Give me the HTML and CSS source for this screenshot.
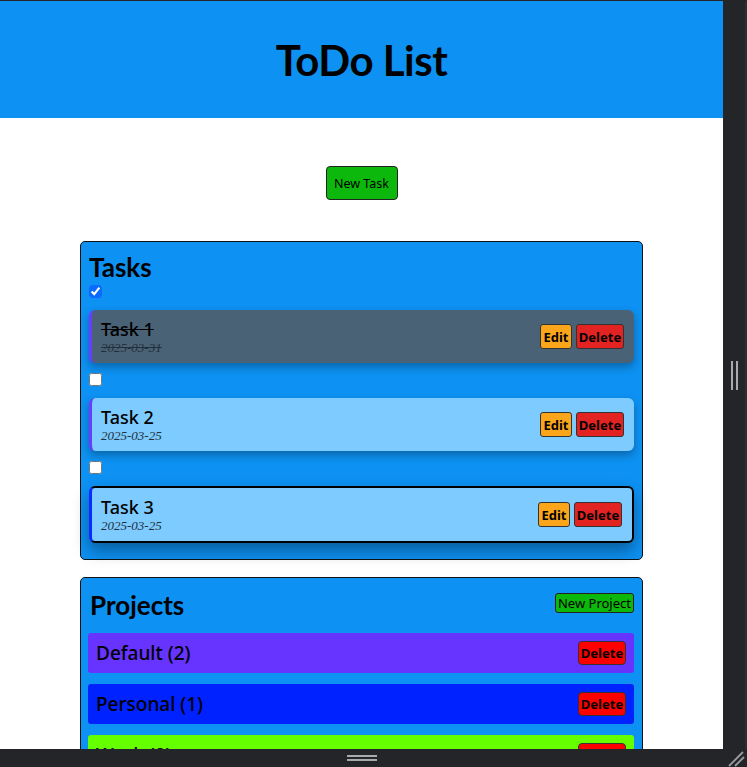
FILE: index.html
```html
<!DOCTYPE html>
<html lang="en">
<head>
<meta charset="utf-8">
<title>ToDo List</title>
<link rel="stylesheet" href="styles.css">
</head>
<body>
<div class="frame">
  <div class="top-edge"></div>
  <div class="top-edge side"></div>
  <div class="viewport">
    <header class="app-header">
      <h1>ToDo List</h1>
    </header>
    <main class="app-main">
      <div class="new-task-row">
        <button class="btn-new-task">New Task</button>
      </div>

      <section class="panel tasks">
        <h2 class="panel-title">Tasks</h2>

        <div class="task-item">
          <input type="checkbox" class="task-check" checked>
          <div class="task-card done">
            <div class="task-info">
              <div class="task-title">Task 1</div>
              <div class="task-date">2025-03-31</div>
            </div>
            <div class="task-actions">
              <button class="btn-edit">Edit</button>
              <button class="btn-delete">Delete</button>
            </div>
          </div>
        </div>

        <div class="task-item">
          <input type="checkbox" class="task-check">
          <div class="task-card">
            <div class="task-info">
              <div class="task-title">Task 2</div>
              <div class="task-date">2025-03-25</div>
            </div>
            <div class="task-actions">
              <button class="btn-edit">Edit</button>
              <button class="btn-delete">Delete</button>
            </div>
          </div>
        </div>

        <div class="task-item">
          <input type="checkbox" class="task-check">
          <div class="task-card active">
            <div class="task-info">
              <div class="task-title">Task 3</div>
              <div class="task-date">2025-03-25</div>
            </div>
            <div class="task-actions">
              <button class="btn-edit">Edit</button>
              <button class="btn-delete">Delete</button>
            </div>
          </div>
        </div>
      </section>

      <section class="panel projects">
        <div class="projects-head">
          <h2 class="panel-title">Projects</h2>
          <button class="btn-new-project">New Project</button>
        </div>
        <div class="project-row p-default">
          <span class="project-name">Default (2)</span>
          <button class="btn-project-delete">Delete</button>
        </div>
        <div class="project-row p-personal">
          <span class="project-name">Personal (1)</span>
          <button class="btn-project-delete">Delete</button>
        </div>
        <div class="project-row p-work">
          <span class="project-name">Work (0)</span>
          <button class="btn-project-delete">Delete</button>
        </div>
      </section>
    </main>
  </div>
  <div class="side-bar">
    <div class="v-handle"><span></span><span></span></div>
  </div>
  <div class="bottom-bar">
    <div class="h-handle"><span></span><span></span></div>
  </div>
  <div class="corner">
    <svg width="20" height="18" viewBox="0 0 20 18">
      <line x1="2" y1="17" x2="16" y2="3" stroke="#9a9ba0" stroke-width="1.8"/>
      <line x1="8" y1="17" x2="17" y2="8" stroke="#9a9ba0" stroke-width="1.8"/>
    </svg>
  </div>
</div>
</body>
</html>
```

FILE: styles.css
```css
* { box-sizing: border-box; }

html, body {
  margin: 0;
  padding: 0;
  background: #242529;
  overflow: hidden;
}

.frame {
  display: grid;
  grid-template-columns: 723px 24px;
  grid-template-rows: 1px 748px 18px;
  width: 747px;
  height: 767px;
  background: #242529;
}

.top-edge { background: #242529; }

.viewport {
  background: #ffffff;
  overflow: hidden;
  font-family: "Noto Sans", "Lato", sans-serif;
  color: #000;
}

.app-header {
  background: #0d91f2;
  height: 117px;
  display: flex;
  align-items: center;
  justify-content: center;
}

.app-header h1 {
  margin: 0;
  font-family: "Lato", "Noto Sans", sans-serif;
  font-size: 42px;
  font-weight: 700;
  letter-spacing: -0.5px;
}

.app-main {
  padding-top: 48px;
  display: flex;
  flex-direction: column;
  align-items: center;
}

.new-task-row {
  display: flex;
  justify-content: center;
  margin-bottom: 41px;
}

button {
  font-family: "Noto Sans", sans-serif;
  color: #000;
  cursor: pointer;
}

.btn-new-task {
  width: 72px;
  height: 34px;
  background: #0bb80b;
  border: 1px solid #222;
  border-radius: 4px;
  font-size: 12.5px;
  padding: 0;
}

.panel {
  width: 563px;
  background: #0d91f2;
  border: 1px solid #111;
  border-radius: 5px;
  padding: 8px;
}

.panel-title {
  margin: 0;
  font-family: "Lato", "Noto Sans", sans-serif;
  font-size: 26px;
  line-height: 30px;
  font-weight: 700;
}

.tasks { margin-bottom: 17px; }
.tasks .panel-title { margin-top: 2px; }

.task-item {
  display: flex;
  flex-direction: column;
  align-items: flex-start;
}

.task-check {
  width: 13px;
  height: 13px;
  margin: 3px 0 0 0;
  accent-color: #0a6cff;
}

.task-card {
  align-self: stretch;
  margin-top: 12px;
  margin-bottom: 7px;
  min-height: 53px;
  padding: 8px 10px 8px 9px;
  background: #7dcbff;
  border-left: 3px solid #6a3cff;
  border-radius: 6px;
  box-shadow: 0 4px 8px rgba(0, 0, 0, 0.3);
  display: flex;
  align-items: center;
  justify-content: space-between;
}

.task-card.done { background: #4a6276; }

.task-card.done .task-title,
.task-card.done .task-date { text-decoration: line-through; }

.task-card.active {
  border: 2px solid #000;
  border-left: 3px solid #0a2cff;
  min-height: 57px;
  box-shadow: 0 8px 16px rgba(0, 0, 0, 0.35);
  margin-bottom: 8px;
}

.task-title {
  font-size: 18px;
  line-height: 22px;
  font-weight: 500;
}

.task-date {
  font-family: "Liberation Serif", serif;
  font-style: italic;
  font-size: 13px;
  line-height: 15px;
  color: #22303d;
}

.task-actions {
  display: flex;
  gap: 4px;
}

.btn-edit,
.btn-delete {
  height: 25px;
  border: 1px solid #333;
  border-radius: 3px;
  font-size: 13px;
  font-weight: 700;
  padding: 0;
}

.btn-edit { width: 32px; background: #fba51a; }
.btn-delete { width: 48px; background: #e32222; }

.projects { padding: 8px 8px 8px 7px; }

.projects-head {
  display: flex;
  align-items: flex-start;
  justify-content: space-between;
  margin: 3px 0 12px 2px;
}

.projects .panel-title { line-height: 32px; }

.btn-new-project {
  margin-top: 4px;
  height: 20px;
  background: #0bb80b;
  border: 1px solid #222;
  border-radius: 3px;
  font-size: 13px;
  padding: 0 2px;
}

.project-row {
  height: 40px;
  margin-bottom: 11px;
  padding: 0 8px;
  border-radius: 3px;
  display: flex;
  align-items: center;
  justify-content: space-between;
}

.project-name {
  font-size: 19px;
  font-weight: 500;
}

.p-default { background: #6633ff; }
.p-personal { background: #0022ff; }
.p-work { background: #66ff00; }

.btn-project-delete {
  width: 48px;
  height: 24px;
  background: #ff0000;
  border: 1px solid #333;
  border-radius: 4px;
  font-size: 13px;
  font-weight: 700;
  padding: 0;
}

.side-bar {
  background: linear-gradient(to right, #242529 0, #242529 22px, #2d2e33 22px);
  display: flex;
  align-items: center;
  justify-content: flex-start;
  padding-left: 8px;
}

.v-handle {
  display: flex;
  gap: 3px;
}

.v-handle span {
  display: block;
  width: 2px;
  height: 29px;
  background: #a9aaad;
}

.bottom-bar {
  background: #242529;
  display: flex;
  align-items: center;
  justify-content: center;
}

.h-handle {
  display: flex;
  flex-direction: column;
  gap: 2px;
}

.h-handle span {
  display: block;
  width: 30px;
  height: 2px;
  background: #a9aaad;
}

.corner {
  background: #242529;
  display: flex;
  align-items: flex-end;
  justify-content: flex-end;
}
```
